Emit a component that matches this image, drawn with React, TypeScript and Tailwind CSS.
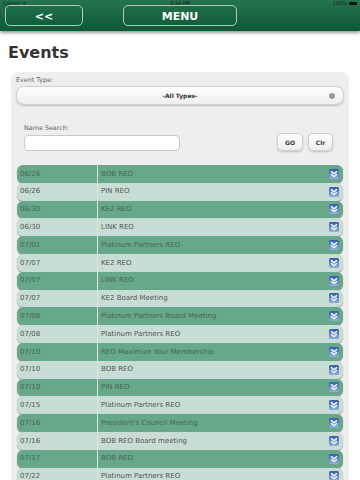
import React from "react";

type Ev = { d: string; t: string };
const events: Ev[] = [
  { d: "06/26", t: "BOB REO" },
  { d: "06/26", t: "PIN REO" },
  { d: "06/30", t: "KE2 REO" },
  { d: "06/30", t: "LINK REO" },
  { d: "07/01", t: "Platinum Partners REO" },
  { d: "07/07", t: "KE2 REO" },
  { d: "07/07", t: "LINK REO" },
  { d: "07/07", t: "KE2 Board Meeting" },
  { d: "07/08", t: "Platinum Partners Board Meeting" },
  { d: "07/08", t: "Platinum Partners REO" },
  { d: "07/10", t: "REO Maximize Your Membership" },
  { d: "07/10", t: "BOB REO" },
  { d: "07/10", t: "PIN REO" },
  { d: "07/15", t: "Platinum Partners REO" },
  { d: "07/16", t: "President's Council Meeting" },
  { d: "07/16", t: "BOB REO Board meeting" },
  { d: "07/17", t: "BOB REO" },
  { d: "07/22", t: "Platinum Partners REO" },
];

function ChevIcon({ id }: { id: number }) {
  const g = `g${id}`;
  return (
    <svg width="10" height="10" viewBox="0 0 10 10" className="shrink-0">
      <defs>
        <linearGradient id={g} x1="0" y1="0" x2="0" y2="1">
          <stop offset="0" stopColor="#2f5fa8" />
          <stop offset="1" stopColor="#8cb0e0" />
        </linearGradient>
      </defs>
      <rect x="0" y="0" width="10" height="10" rx="1.5" fill={`url(#${g})`} />
      <path d="M2 2.3 L5 4.8 L8 2.3" fill="none" stroke="#fff" strokeWidth="1.4" />
      <path d="M2 5.2 L5 7.7 L8 5.2" fill="none" stroke="#fff" strokeWidth="1.4" />
    </svg>
  );
}

export default function App() {
  return (
    <div className="w-[360px] h-[480px] overflow-hidden bg-white font-['DejaVu_Sans',sans-serif]">
      <div className="relative h-[31px] bg-gradient-to-b from-[#24744d] to-[#0d5935] shadow-[0_2px_3px_rgba(0,0,0,0.4)] z-10">
        <div className="absolute top-0 left-0 right-0 h-[7px] flex items-center justify-between px-[3px] text-[5px] leading-none text-[#1a1a1a]">
          <span>Carrier ᯤ</span>
          <span className="absolute left-1/2 -translate-x-1/2">2:34 PM</span>
          <span className="flex items-center gap-[2px]">
            100%
            <span className="inline-block w-[8px] h-[3px] bg-[#111] rounded-[1px]" />
          </span>
        </div>
        <div className="flex pt-[5px] pl-[5px]">
          <div className="w-[78px] h-[21px] rounded-[5px] border border-[#b4c9bd] flex items-center justify-center text-white font-bold text-[11px] leading-none pt-[1px]">
            &lt;&lt;
          </div>
          <div className="ml-[40px] w-[114px] h-[21px] rounded-[5px] border border-[#b4c9bd] flex items-center justify-center text-white font-bold text-[11px] leading-none pt-[1px]">
            MENU
          </div>
        </div>
      </div>

      <div className="pl-[8px] pt-[13px] h-[41px] text-[16px] leading-[18px] font-bold text-[#333]">
        Events
      </div>

      <div className="mx-[11px] rounded-t-[8px] bg-[#eeeeee] pt-[3px] px-[5px] pb-[10px]">
        <div className="text-[6.4px] leading-[7px] text-[#666] h-[11px] pt-[2px]">Event Type:</div>
        <div className="h-[19px] rounded-[8px] border border-[#cfcfcf] bg-gradient-to-b from-[#ffffff] to-[#efefef] shadow-[0_1px_2px_rgba(0,0,0,0.2)] relative flex items-center justify-center">
          <span className="text-[6px] font-bold text-[#333]">-All Types-</span>
          <span className="absolute right-[8px] top-1/2 -translate-y-1/2 w-[6px] h-[6px] rounded-full bg-[#999]" />
        </div>
        <div className="pt-[20px] pl-[8px] text-[6.4px] leading-[7px] text-[#666]">Name Search:</div>
        <div className="flex items-end pt-[1px]">
          <div className="ml-[8px] w-[156px] h-[16px] rounded-[4px] border border-[#c8c8c8] bg-white" />
          <div className="ml-auto mr-[11px] flex gap-[5px]">
            <div className="w-[26px] h-[18px] rounded-[5px] border border-[#cfcfcf] bg-gradient-to-b from-white to-[#eeeeee] shadow-[0_1px_2px_rgba(0,0,0,0.2)] flex items-center justify-center text-[6px] font-bold text-[#333]">GO</div>
            <div className="w-[25px] h-[18px] rounded-[5px] border border-[#cfcfcf] bg-gradient-to-b from-white to-[#eeeeee] shadow-[0_1px_2px_rgba(0,0,0,0.2)] flex items-center justify-center text-[6px] font-bold text-[#333]">Clr</div>
          </div>
        </div>
        <div className="mt-[14px] mx-[1px] flex flex-col">
          {events.map((e, i) => {
            const dark = i % 2 === 0;
            return (
              <div
                key={i}
                className={
                  "h-[17.8px] shrink-0 rounded-[6px] flex items-center text-[7px] shadow-[0_1px_1px_rgba(0,0,0,0.35)] " +
                  (dark ? "bg-[#67a88a] text-[#456656]" : "bg-[#c8ddd3] text-[#555]")
                }
              >
                <div className="w-[81px] pl-[3px] h-full flex items-center border-r border-[#d9e8e0]">{e.d}</div>
                <div className="flex-1 pl-[3px]">{e.t}</div>
                <div className="pr-[4px]">
                  <ChevIcon id={i} />
                </div>
              </div>
            );
          })}
        </div>
      </div>
    </div>
  );
}
